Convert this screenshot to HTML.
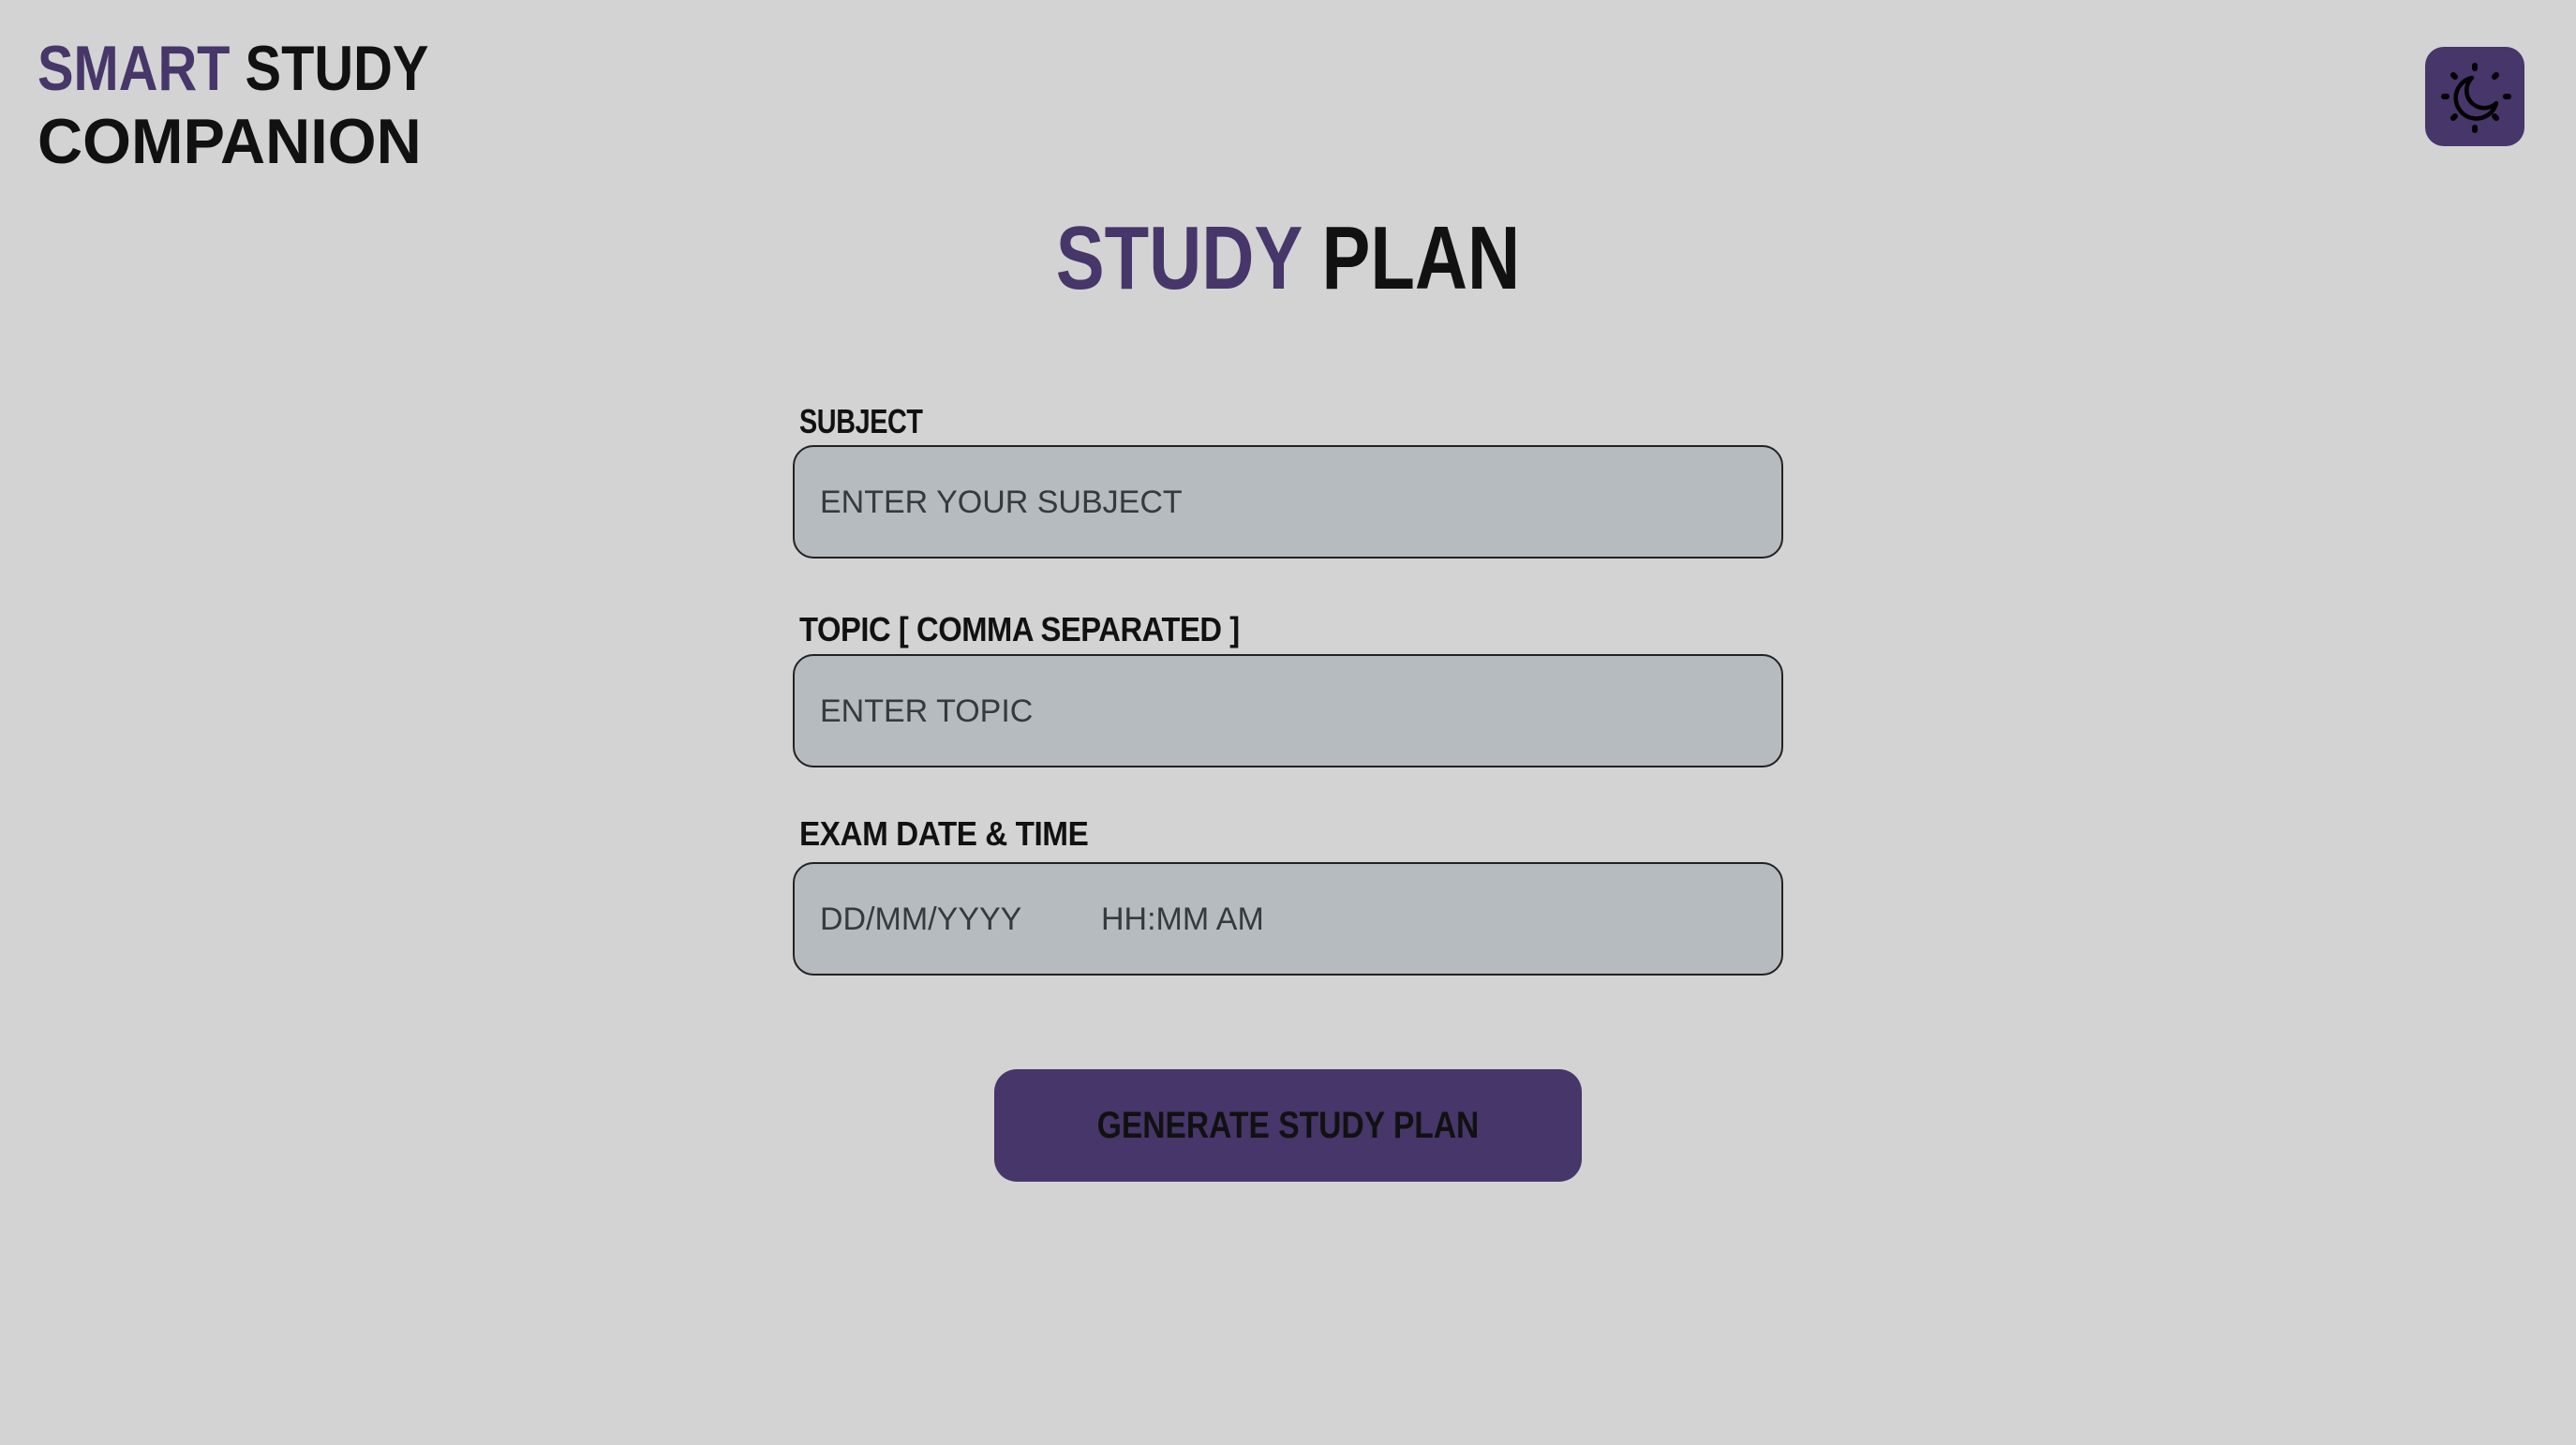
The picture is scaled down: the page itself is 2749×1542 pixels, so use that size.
<!DOCTYPE html>
<html><head><meta charset="utf-8"><style>
html,body{margin:0;padding:0}
body{width:2749px;height:1542px;background:#d3d3d3;position:relative;overflow:hidden;font-family:"Liberation Sans",sans-serif}
.logo{position:absolute;left:40px;font-weight:bold;font-size:68px;line-height:78px;color:#111;transform-origin:left top;white-space:nowrap}
.p{color:#463669}
.icon{position:absolute;left:2588px;top:50px;width:106px;height:106px;background:#463669;border-radius:20px}
.title{position:absolute;left:0;width:2749px;top:226px;text-align:center;font-weight:bold;font-size:96px;line-height:100px;color:#111;transform:scaleX(0.81);transform-origin:center top}
.lbl{position:absolute;left:853px;font-weight:bold;font-size:36px;line-height:40px;color:#111;transform:scaleX(0.8);transform-origin:left top;white-space:nowrap;letter-spacing:-0.5px}
.inp{position:absolute;left:846px;width:1053px;height:117px;background:#b6bbbf;border:2px solid #222;border-radius:22px}
.inp span{position:absolute;top:38px;font-size:34px;line-height:42px;color:#353a3e}
.btn{position:absolute;left:1061px;top:1141px;width:627px;height:120px;background:#463669;border-radius:24px}
.btn div{text-align:center;line-height:120px;font-weight:bold;font-size:40px;color:#111;transform:scaleX(0.84);white-space:nowrap}
</style></head><body>
<div class="logo" style="top:34px;transform:scaleX(0.85)"><span class="p">SMART</span> STUDY</div>
<div class="logo" style="top:112px;transform:scaleX(0.98)">COMPANION</div>
<div class="icon"><svg width="106" height="106" viewBox="0 0 106 106">
<g stroke="#000" stroke-width="6" stroke-linecap="round" fill="none">
<line x1="53" y1="20" x2="53" y2="23"/><line x1="53" y1="86" x2="53" y2="89"/>
<line x1="20" y1="53" x2="23" y2="53"/><line x1="86" y1="53" x2="89" y2="53"/>
<line x1="30" y1="30" x2="32" y2="32"/><line x1="76" y1="30" x2="74" y2="32"/>
<line x1="30" y1="76" x2="32" y2="74"/><line x1="76" y1="76" x2="74" y2="74"/>
</g>
<path d="M50 33 A22 22 0 1 0 76 60 A17 17 0 0 1 50 33 Z" stroke="#000" stroke-width="4.5" fill="none" stroke-linejoin="round"/>
</svg></div>
<div class="title"><span class="p">STUDY</span> PLAN</div>
<div class="lbl" style="top:430px">SUBJECT</div>
<div class="inp" style="top:475px"><span style="left:27px">ENTER YOUR SUBJECT</span></div>
<div class="lbl" style="top:652px;transform:scaleX(0.91)">TOPIC [ COMMA SEPARATED ]</div>
<div class="inp" style="top:698px"><span style="left:27px">ENTER TOPIC</span></div>
<div class="lbl" style="top:870px;transform:scaleX(0.925)">EXAM DATE &amp; TIME</div>
<div class="inp" style="top:920px"><span style="left:27px">DD/MM/YYYY</span><span style="left:327px">HH:MM AM</span></div>
<div class="btn"><div>GENERATE STUDY PLAN</div></div>
</body></html>
